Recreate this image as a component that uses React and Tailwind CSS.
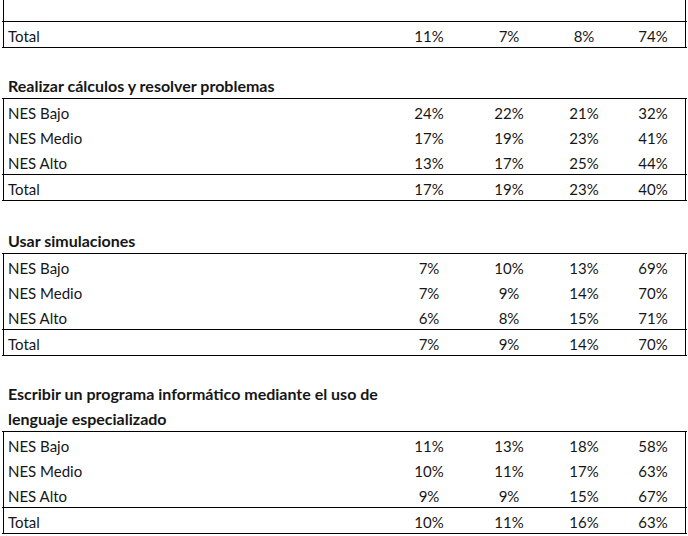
import React from "react";

// Tabla de frecuencias por nivel socioeconómico
const sections = [
  {
    title: ["Realizar cálculos y resolver problemas"],
    gap: "mt-[25px]",
    rows: [
      ["NES Bajo", "24%", "22%", "21%", "32%"],
      ["NES Medio", "17%", "19%", "23%", "41%"],
      ["NES Alto", "13%", "17%", "25%", "44%"],
    ],
    total: ["Total", "17%", "19%", "23%", "40%"],
  },
  {
    title: ["Usar simulaciones"],
    gap: "mt-[27px]",
    rows: [
      ["NES Bajo", "7%", "10%", "13%", "69%"],
      ["NES Medio", "7%", "9%", "14%", "70%"],
      ["NES Alto", "6%", "8%", "15%", "71%"],
    ],
    total: ["Total", "7%", "9%", "14%", "70%"],
  },
  {
    title: [
      "Escribir un programa informático mediante el uso de",
      "lenguaje especializado",
    ],
    gap: "mt-[25px]",
    rows: [
      ["NES Bajo", "11%", "13%", "18%", "58%"],
      ["NES Medio", "10%", "11%", "17%", "63%"],
      ["NES Alto", "9%", "9%", "15%", "67%"],
    ],
    total: ["Total", "10%", "11%", "16%", "63%"],
  },
];

const Row = ({ cells }) => (
  <div className="grid grid-cols-[1fr_84px_76px_74px_64px] h-[25px] pt-[3px] leading-[22px]">
    <div className="pl-[4px]">{cells[0]}</div>
    {cells.slice(1).map((v, i) => (
      <div key={i} className="text-center">
        {v}
      </div>
    ))}
  </div>
);

const Line = () => <div className="h-px bg-black -mx-[2px]" />;

const Table = ({ rows, total }) => (
  <div className="border-l border-r border-black">
    <Line />
    {rows.map((r) => (
      <Row key={r[0]} cells={r} />
    ))}
    <Line />
    <Row cells={total} />
    <Line />
  </div>
);

export default function App() {
  return (
    <div
      className="w-[688px] h-[536px] overflow-hidden bg-white text-[15px] text-[#161616]"
      style={{ fontFamily: "Lato, 'Liberation Sans', sans-serif" }}
    >
      <div className="ml-[3px] w-[683px]">
        {/* tail of previous table */}
        <div className="border-l border-r border-black h-[21px]" />
        <div className="border-l border-r border-black">
          <Line />
          <Row cells={["Total", "11%", "7%", "8%", "74%"]} />
          <Line />
        </div>

        {sections.map((s) => (
          <div key={s.title[0]} className={s.gap}>
            <div className="pl-[5px] font-bold text-[16px] leading-[25px]">
              {s.title.map((t) => (
                <div key={t}>{t}</div>
              ))}
            </div>
            <Table rows={s.rows} total={s.total} />
          </div>
        ))}
      </div>
    </div>
  );
}
